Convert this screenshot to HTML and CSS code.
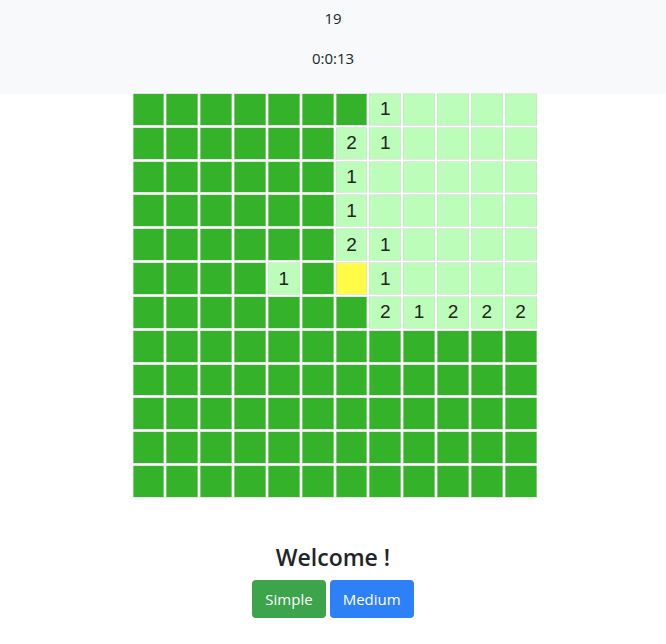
FILE: index.html
```html
<!DOCTYPE html>
<html>
<head>
<meta charset="utf-8">
<link rel="stylesheet" href="styles.css">
</head>
<body>
<header class="topbar">
  <div class="stat">19</div>
  <div class="stat">0:0:13</div>
</header>
<main class="board">
  <div class="cell"></div><div class="cell"></div><div class="cell"></div><div class="cell"></div><div class="cell"></div><div class="cell"></div><div class="cell"></div><div class="cell open">1</div><div class="cell open"></div><div class="cell open"></div><div class="cell open"></div><div class="cell open"></div>
  <div class="cell"></div><div class="cell"></div><div class="cell"></div><div class="cell"></div><div class="cell"></div><div class="cell"></div><div class="cell open">2</div><div class="cell open">1</div><div class="cell open"></div><div class="cell open"></div><div class="cell open"></div><div class="cell open"></div>
  <div class="cell"></div><div class="cell"></div><div class="cell"></div><div class="cell"></div><div class="cell"></div><div class="cell"></div><div class="cell open">1</div><div class="cell open"></div><div class="cell open"></div><div class="cell open"></div><div class="cell open"></div><div class="cell open"></div>
  <div class="cell"></div><div class="cell"></div><div class="cell"></div><div class="cell"></div><div class="cell"></div><div class="cell"></div><div class="cell open">1</div><div class="cell open"></div><div class="cell open"></div><div class="cell open"></div><div class="cell open"></div><div class="cell open"></div>
  <div class="cell"></div><div class="cell"></div><div class="cell"></div><div class="cell"></div><div class="cell"></div><div class="cell"></div><div class="cell open">2</div><div class="cell open">1</div><div class="cell open"></div><div class="cell open"></div><div class="cell open"></div><div class="cell open"></div>
  <div class="cell"></div><div class="cell"></div><div class="cell"></div><div class="cell"></div><div class="cell open">1</div><div class="cell"></div><div class="cell mark"></div><div class="cell open">1</div><div class="cell open"></div><div class="cell open"></div><div class="cell open"></div><div class="cell open"></div>
  <div class="cell"></div><div class="cell"></div><div class="cell"></div><div class="cell"></div><div class="cell"></div><div class="cell"></div><div class="cell"></div><div class="cell open">2</div><div class="cell open">1</div><div class="cell open">2</div><div class="cell open">2</div><div class="cell open">2</div>
  <div class="cell"></div><div class="cell"></div><div class="cell"></div><div class="cell"></div><div class="cell"></div><div class="cell"></div><div class="cell"></div><div class="cell"></div><div class="cell"></div><div class="cell"></div><div class="cell"></div><div class="cell"></div>
  <div class="cell"></div><div class="cell"></div><div class="cell"></div><div class="cell"></div><div class="cell"></div><div class="cell"></div><div class="cell"></div><div class="cell"></div><div class="cell"></div><div class="cell"></div><div class="cell"></div><div class="cell"></div>
  <div class="cell"></div><div class="cell"></div><div class="cell"></div><div class="cell"></div><div class="cell"></div><div class="cell"></div><div class="cell"></div><div class="cell"></div><div class="cell"></div><div class="cell"></div><div class="cell"></div><div class="cell"></div>
  <div class="cell"></div><div class="cell"></div><div class="cell"></div><div class="cell"></div><div class="cell"></div><div class="cell"></div><div class="cell"></div><div class="cell"></div><div class="cell"></div><div class="cell"></div><div class="cell"></div><div class="cell"></div>
  <div class="cell"></div><div class="cell"></div><div class="cell"></div><div class="cell"></div><div class="cell"></div><div class="cell"></div><div class="cell"></div><div class="cell"></div><div class="cell"></div><div class="cell"></div><div class="cell"></div><div class="cell"></div>
</main>
<section class="welcome">
  <h4 class="title">Welcome !</h4>
  <div class="actions">
    <button class="btn btn-green">Simple</button>
    <button class="btn btn-blue">Medium</button>
  </div>
</section>
</body>
</html>
```
FILE: styles.css
```css
html, body {
  margin: 0;
  padding: 0;
  background: #fff;
  font-family: "Open Sans", "Noto Sans", sans-serif;
  color: #212529;
}
.topbar {
  background: #f8f9fa;
  height: 94px;
  box-sizing: border-box;
  padding-top: 6px;
  display: flex;
  flex-direction: column;
  align-items: center;
  gap: 16px;
}
.stat {
  font-size: 15px;
  line-height: 24px;
}
.board {
  width: 403px;
  margin: 0 auto;
  display: grid;
  grid-template-columns: repeat(12, 1fr);
  grid-auto-rows: 30.83px;
  gap: 3px;
  transform: translateX(1.5px);
}
.cell {
  background: #34b32a;
  box-shadow: 0 0 0 0.6px #d6d6d6;
  font-family: "Liberation Sans", Arial, sans-serif;
  font-size: 19px;
  color: #222;
  display: flex;
  align-items: center;
  justify-content: center;
}
.cell.open {
  background: #bcfdb9;
}
.cell.mark {
  background: #fffb47;
}
.welcome {
  margin-top: 46px;
  display: flex;
  flex-direction: column;
  align-items: center;
}
.title {
  margin: 0 0 8px;
  font-size: 23px;
  font-weight: 600;
  line-height: 29px;
}
.actions {
  display: flex;
  gap: 4px;
}
.btn {
  font-family: "Open Sans", "Noto Sans", sans-serif;
  font-size: 15px;
  line-height: 24px;
  padding: 6px 12px;
  border: 1px solid transparent;
  border-radius: 4px;
  color: #fff;
}
.btn-green {
  background: #3ca54c;
}
.btn-blue {
  background: #2e80f7;
}
```
